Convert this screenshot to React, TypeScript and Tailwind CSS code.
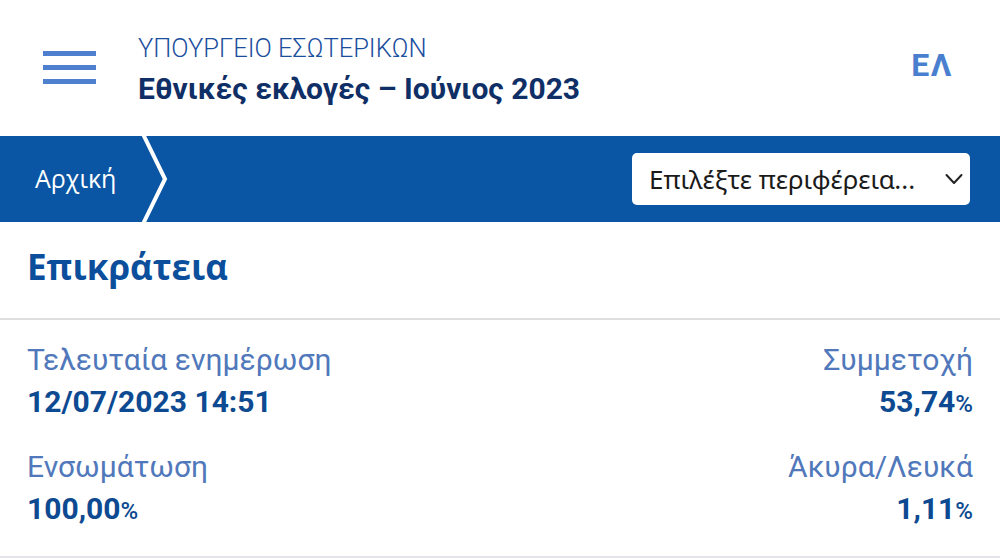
import React from "react";

const Stat = ({ label, value, pct, right, top }: { label: string; value: string; pct?: boolean; right?: boolean; top?: boolean }) => (
  <div className={(right ? "flex flex-col items-end" : "flex flex-col items-start") + (top ? "" : " mt-[27px]")}>
    <div className="text-[30px] leading-[36px] text-[#5078bb]">{label}</div>
    <div className="mt-[6px] text-[30px] leading-[36px] font-bold text-[#0d4a91]">
      {value}
      {pct && <span className="text-[24px] font-medium">%</span>}
    </div>
  </div>
);

const App: React.FC = () => {
  return (
    <div className="w-[1000px] h-[558px] bg-white overflow-hidden font-['Roboto',sans-serif]">
      <header className="h-[136px] flex items-start pl-[43px] pr-[48px]">
        <button className="flex flex-col gap-[9px] w-[53px] mr-[42px] mt-[51px]">
          <span className="block h-[5px] bg-[#4f7fcf]" />
          <span className="block h-[5px] bg-[#4f7fcf]" />
          <span className="block h-[5px] bg-[#4f7fcf]" />
        </button>
        <div className="flex-1 pt-[33px]">
          <div className="text-[25.5px] leading-[30px] font-light text-[#1b4f9e]">ΥΠΟΥΡΓΕΙΟ ΕΣΩΤΕΡΙΚΩΝ</div>
          <div className="mt-[8px] text-[30px] leading-[36px] font-bold text-[#0f2f66]">Εθνικές εκλογές – Ιούνιος 2023</div>
        </div>
        <div className="text-[32px] leading-[38px] font-bold text-[#4a7fd0] mt-[46px] -mr-[1px] tracking-[1.5px]">ΕΛ</div>
      </header>

      <nav className="h-[86px] bg-[#0a55a4] flex items-center pr-[30px]">
        <div className="relative h-full flex items-center pl-[35px] pr-[27px]">
          <span className="text-[25px] text-white font-['Open_Sans',sans-serif]">Αρχική</span>
          <svg className="absolute right-[-28px] top-0" width="30" height="86" viewBox="0 0 30 86">
            <polyline points="2,-2 24,43 2,88" fill="none" stroke="white" strokeWidth="4" />
          </svg>
        </div>
        <div className="flex-1" />
        <div className="w-[338px] h-[52px] bg-white rounded-[5px] flex items-center pl-[17px] pr-[7px] font-['Noto_Sans',sans-serif]">
          <span className="flex-1 text-[26px] leading-[32px] text-[#1a1a1a] whitespace-nowrap">Επιλέξτε περιφέρεια...</span>
          <svg width="18" height="12" viewBox="0 0 18 12" fill="none" stroke="#222" strokeWidth="2" strokeLinecap="round" strokeLinejoin="round">
            <polyline points="1.5,2 9,10 16.5,2" />
          </svg>
        </div>
      </nav>

      <div className="h-[98px] border-b-2 border-[#dedede] flex items-center px-[27px]">
        <h1 className="text-[35px] font-bold text-[#0b4f9c] font-['Open_Sans',sans-serif] -mt-[6px]">Επικράτεια</h1>
      </div>

      <div className="px-[27px] pt-[22px] pb-[27px] border-b-2 border-[#e3e5ea] grid grid-cols-2">
        <Stat label="Τελευταία ενημέρωση" value="12/07/2023 14:51" top />
        <Stat label="Συμμετοχή" value="53,74" pct right top />
        <Stat label="Ενσωμάτωση" value="100,00" pct />
        <Stat label="Άκυρα/Λευκά" value="1,11" pct right />
      </div>
    </div>
  );
};

export default App;
